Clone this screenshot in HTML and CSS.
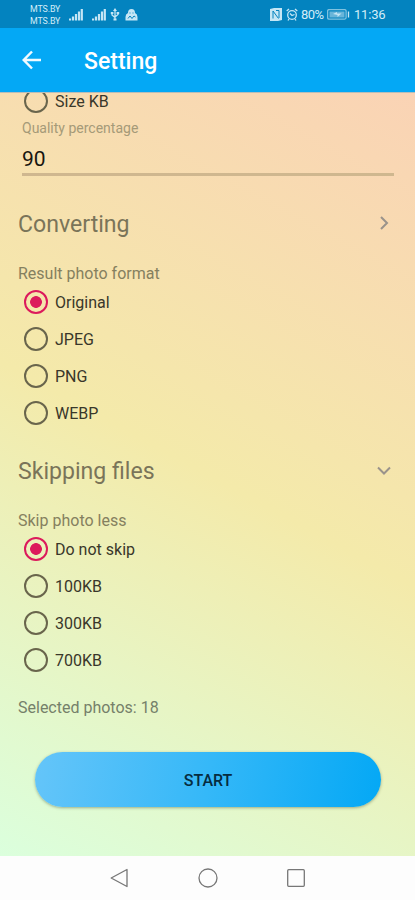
FILE: index.html
```html
<!DOCTYPE html>
<html lang="en">
<head>
<meta charset="utf-8">
<title>Setting</title>
<link rel="stylesheet" href="styles.css">
</head>
<body>
<div class="screen">
  <div class="status">
    <div class="carrier"><span>MTS.BY</span><span>MTS.BY</span></div>
    <svg class="signal" width="14" height="14" viewBox="0 0 14 14"><path d="M1 12.500v-2M4 12.500v-4M7 12.500V6M10 12.500v-9M12.800 12.500V1"/></svg>
    <svg class="signal second" width="14" height="14" viewBox="0 0 14 14"><path d="M1 12.500v-2M4 12.500v-4M7 12.500V6M10 12.500v-9M12.800 12.500V1"/></svg>
    <svg class="usb" width="10" height="14" viewBox="0 0 10 14"><path d="M5 2v9M2 5v2l3 2.500M8 5v1.500L5 9"/><path class="solid" d="M5 0l2 3H3zM.8 4h2.600v2H.8zM6.600 4h2.600v2H6.600zM3.500 10.500h3v2h-3z"/></svg>
    <svg class="cloud" width="13" height="14" viewBox="0 0 13 14"><path class="solid" d="M3 5Q3 1 6.500 1T10 5Q12.500 6 12.500 9v3.500H.5V9Q.5 6 3 5z"/><path class="cut" d="M4.500 5h1M7.500 5h1M3 10.500L5 8l2 2.500L9 8l1.500 1"/></svg>
    <div class="spacer"></div>
    <svg class="nfc" width="12" height="13" viewBox="0 0 12 13"><path class="solid" d="M0 1l4-1h8v12l-4 1H0z"/><path class="cut" d="M3 10.500V3l5.500 7.500M6 2.500h3V10"/></svg>
    <svg class="alarm" width="12" height="13" viewBox="0 0 12 13"><circle cx="6" cy="7" r="4.300"/><path d="M.7 3L3 1M11.300 3L9 1M4 5.500l2 2 2.500-1M3 11l-1 1.500M9 11l1 1.500"/></svg>
    <span class="percent">80%</span>
    <svg class="battery" width="23" height="11" viewBox="0 0 23 11"><rect class="level" x="2.500" y="2.500" width="15" height="6"/><rect class="shell" x=".6" y=".6" width="18.500" height="9.500" rx="1.500"/><path d="M21.500 2.500v6"/><path class="solid" d="M6 5l4-2v1.500h4.500L10.500 8V6z"/></svg>
    <span class="clock">11:36</span>
  </div>
  <header class="bar">
    <svg width="20" height="20" viewBox="0 0 20 20"><path d="M19 10H2M10 1.500L1.700 10l8.300 8.500"/></svg>
    <h1>Setting</h1>
  </header>
  <main class="content">
    <div class="radio clipped"><i></i><span>Size KB</span></div>
    <div class="field">
      <label>Quality percentage</label>
      <div class="value">90</div>
    </div>
    <div class="section converting"><h2>Converting</h2><svg width="10" height="14" viewBox="0 0 10 14"><path d="M2 1l6 6-6 6"/></svg></div>
    <p class="caption">Result photo format</p>
    <div class="radio on"><i></i><span>Original</span></div>
    <div class="radio"><i></i><span>JPEG</span></div>
    <div class="radio"><i></i><span>PNG</span></div>
    <div class="radio"><i></i><span>WEBP</span></div>
    <div class="section skipping"><h2>Skipping files</h2><svg width="14" height="10" viewBox="0 0 14 10"><path d="M1 1.500l6 6 6-6"/></svg></div>
    <p class="caption">Skip photo less</p>
    <div class="radio on"><i></i><span>Do not skip</span></div>
    <div class="radio"><i></i><span>100KB</span></div>
    <div class="radio"><i></i><span>300KB</span></div>
    <div class="radio"><i></i><span>700KB</span></div>
    <p class="caption selected">Selected photos: 18</p>
    <button class="start">START</button>
  </main>
  <nav class="nav">
    <svg width="20" height="20" viewBox="0 0 20 20"><path d="M17 1.500v17L1.200 10z"/></svg>
    <svg width="20" height="20" viewBox="0 0 20 20"><circle cx="10" cy="10" r="9"/></svg>
    <svg width="20" height="20" viewBox="0 0 20 20"><rect x="1.700" y="1.700" width="16.600" height="16.600" rx="1"/></svg>
  </nav>
</div>
</body>
</html>
```
FILE: styles.css
```css
* { box-sizing: border-box; }
body { margin: 0; font-family: Roboto, sans-serif; }
h1, h2, p { margin: 0; font-weight: 400; }
svg { display: block; flex: none; fill: none; }
.screen { width: 415px; height: 900px; display: flex; flex-direction: column; overflow: hidden; }

.status { height: 28px; flex: none; background: #0383bf; color: #d3edf8; display: flex; align-items: center; padding: 1px 28px 0 30px; }
.status svg { stroke: #c5e6f5; stroke-width: 1.300; }
.status .solid { fill: #c5e6f5; stroke: none; }
.status .cut { stroke: #0383bf; stroke-width: 1; }
.carrier { display: flex; flex-direction: column; width: 39px; font-size: 8.800px; line-height: 12px; letter-spacing: -.1px; }
.status .signal { stroke-width: 2.200; }
.second { margin-left: 9px; }
.usb { margin-left: 4px; }
.cloud { margin-left: 5px; }
.spacer { flex: 1; }
.nfc { margin-right: 4px; }
.alarm { margin-right: 3px; }
.percent, .clock { font-size: 13px; line-height: 14px; padding-top: 1px; }
.percent { width: 26px; letter-spacing: -.6px; }
.clock { width: 33px; margin-left: 4px; letter-spacing: -.2px; }
.status .level { fill: #69b5d9; stroke: none; }
.status .shell { stroke: #7fc2e0; }

.bar { height: 64px; flex: none; background: #04a8f5; display: flex; align-items: center; padding: 0 22px; color: #fff; }
.bar svg { stroke: #f0faff; stroke-width: 2.500; }
.bar h1 { margin: 3px 0 0 42px; font-size: 23px; font-weight: 500; line-height: 28px; }

.content { height: 764px; flex: none; overflow: hidden; padding: 0 18px; border-top: 1px solid #b9bdb9; background: linear-gradient(28.500deg, #dbffdd 0%, #f4eaaa 50%, #fad3b5 100%); }
.radio { height: 37px; display: flex; align-items: center; padding-left: 6px; font-size: 16px; color: #39372a; }
.radio span { padding-top: 2px; }
.radio i { width: 24px; height: 24px; border: 2px solid #69654c; border-radius: 50%; margin-right: 7px; flex: none; }
.radio.on i { border-color: #dc1a5c; background: radial-gradient(circle, #dc1a5c 5.500px, transparent 6.200px); }
.clipped { margin-top: -11px; }
.field { margin: 0 3px 0 4px; border-bottom: 3px solid #cfb78f; height: 57px; }
.field label { display: block; font-size: 14px; line-height: 18px; color: #a59a78; }
.value { font-size: 21px; line-height: 26px; margin-top: 9px; color: #17150f; }
.section { display: flex; justify-content: space-between; align-items: center; height: 32px; color: #7a7459; }
.section h2 { font-size: 23.100px; line-height: 30px; margin-top: 1px; }
.section svg { stroke: #9a938b; stroke-width: 2; }
.converting { margin-top: 32px; padding-right: 8px; }
.converting svg { margin-top: -2px; }
.skipping { margin-top: 24px; padding-right: 6px; }
.caption { font-size: 16px; line-height: 20px; padding-top: 1px; height: 20px; margin-top: 23px; color: #85805f; }
.selected { margin-top: 19px; color: #75806a; }
.start { display: block; width: 346px; height: 55px; margin: 35px 0 0 17px; padding: 1px 0 0; border: 0; border-radius: 28px; background: linear-gradient(100deg, #65c5f9, #35b8f8 50%, #04a8f5); box-shadow: 0 1px 3px rgba(70, 85, 50, .45); font: 500 16px Roboto, sans-serif; color: #062c40; }

.nav { height: 44px; flex: none; background: #fdfdfd; display: flex; justify-content: center; align-items: center; gap: 68px; }
.nav svg { stroke: #777; stroke-width: 1.300; stroke-linejoin: round; }
```
